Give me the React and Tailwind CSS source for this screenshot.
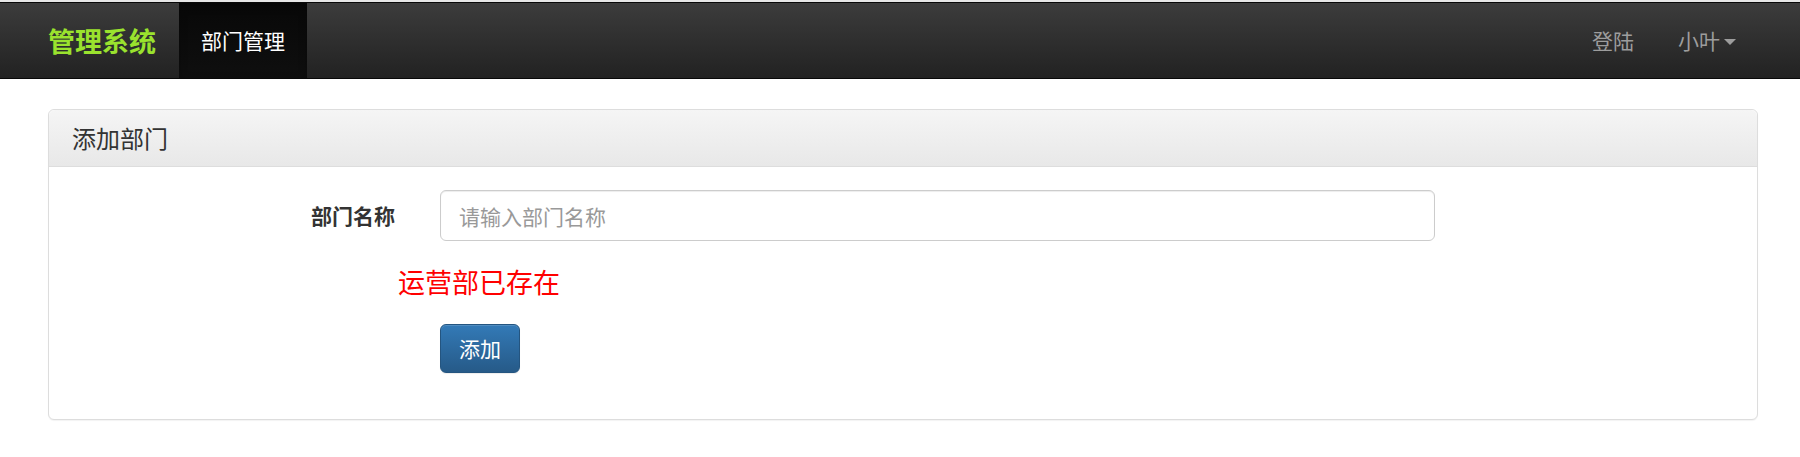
import { useState } from 'react';

const font = { fontFamily: '"Noto Sans CJK SC", "Liberation Sans", sans-serif' };

function Navbar() {
  return (
    <>
      <div className="h-[2px] bg-[#e6e6e6]" />
      <nav className="flex h-[77px] items-center border-y border-[#080808] bg-gradient-to-b from-[#3c3c3c] to-[#222222]">
        <a className="pl-[48px] pr-[23px] text-[27px] font-bold leading-[75px] text-[#9ae22e]">管理系统</a>
        <a className="h-full bg-gradient-to-b from-[#080808] to-[#0f0f0f] px-[22px] text-[21px] leading-[75px] text-white shadow-[inset_0_3px_9px_rgba(0,0,0,0.25)]">
          部门管理
        </a>
        <div className="ml-auto mr-[42px] flex">
          <a className="px-[22px] text-[21px] leading-[75px] text-[#9d9d9d]">登陆</a>
          <a className="flex items-center pl-[22px] pr-[22px] text-[21px] leading-[75px] text-[#9d9d9d]">
            小叶
            <span className="ml-[4px] mt-[2px] h-0 w-0 border-x-[6px] border-t-[6px] border-x-transparent border-t-[#9d9d9d]" />
          </a>
        </div>
      </nav>
    </>
  );
}

function AddDept() {
  const [name, setName] = useState('');

  return (
    <div className="ml-[48px] mr-[42px] mt-[30px] rounded-[6px] border border-[#dddddd] bg-white shadow-[0_1px_1px_rgba(0,0,0,0.05)]">
      {/* heading */}
      <div className="flex h-[57px] items-center rounded-t-[6px] border-b border-[#dddddd] bg-gradient-to-b from-[#f5f5f5] to-[#e8e8e8] px-[23px]">
        <h3 className="text-[24px] leading-none text-[#333333]">添加部门</h3>
      </div>

      {/* body */}
      <div className="px-[23px] pb-[46px] pt-[23px]">
        <div className="flex items-center">
          <label className="w-[323px] text-right text-[21px] font-bold text-[#333333]">部门名称</label>
          <input
            className="ml-[45px] h-[51px] w-[995px] rounded-[6px] border border-[#cccccc] px-[18px] text-[21px] text-[#555555] shadow-[inset_0_1px_1px_rgba(0,0,0,0.075)] outline-none placeholder:text-[#999999]"
            style={font}
            placeholder="请输入部门名称"
            value={name}
            onChange={(e) => setName(e.target.value)}
          />
        </div>

        <div className="mt-[21px] pl-[326px] text-[27px] leading-[40px] text-[#ff0000]">运营部已存在</div>

        <div className="mt-[22px] pl-[368px]">
          <button
            className="h-[49px] rounded-[6px] border border-[#245580] bg-gradient-to-b from-[#337ab7] to-[#265a88] px-[18px] text-[21px] text-white shadow-[inset_0_1px_0_rgba(255,255,255,0.15),0_1px_1px_rgba(0,0,0,0.075)]"
            style={font}
          >
            添加
          </button>
        </div>
      </div>
    </div>
  );
}

export default function App() {
  return (
    <div className="min-h-[457px] bg-white" style={font}>
      <Navbar />
      <AddDept />
    </div>
  );
}
